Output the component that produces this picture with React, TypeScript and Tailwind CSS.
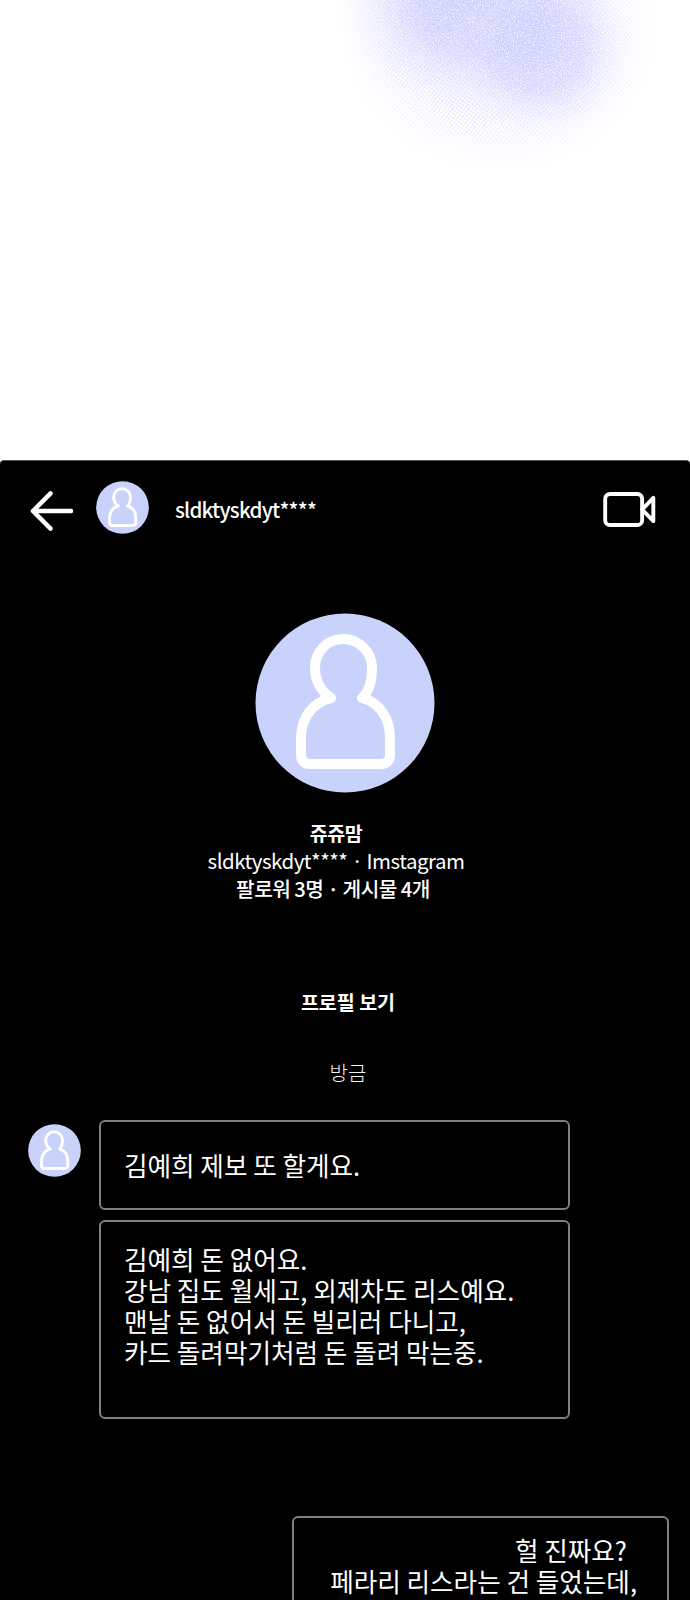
const FONT = "font-['Noto_Sans_CJK_KR','Noto_Sans',sans-serif]";

function Avatar({ size, stroke }: { size: string; stroke: number }) {
  return (
    <svg viewBox="0 0 180 180" className={`${size} shrink-0`} aria-hidden="true">
      <circle cx="90" cy="90" r="89.5" fill="#c9d2fa" />
      <path
        d="M76 85 C65 78 60 66 60 55 C60 39 72 26 88 26 C104 26 117 39 117 55 C117 66 115 78 107 85 C124 89 135 105 135 125 L135 142 C135 148 131 151 126 151 L55 151 C50 151 46 148 46 142 L46 125 C46 105 58 89 76 85 Z"
        fill="none"
        stroke="#fff"
        strokeWidth={stroke}
        strokeLinejoin="round"
      />
    </svg>
  );
}

function Blob() {
  return (
    <svg viewBox="0 0 390 190" className="absolute left-[300px] top-0 w-[390px] h-[190px]" aria-hidden="true">
      <defs>
        <radialGradient id="core" cx="0.5" cy="0.5" r="0.5">
          <stop offset="0" stopColor="#cbcbff" stopOpacity="1" />
          <stop offset="0.45" stopColor="#cfcfff" stopOpacity="0.9" />
          <stop offset="0.75" stopColor="#dcdcff" stopOpacity="0.35" />
          <stop offset="1" stopColor="#f2f2ff" stopOpacity="0" />
        </radialGradient>
        <radialGradient id="halo" cx="0.5" cy="0.5" r="0.5">
          <stop offset="0" stopColor="#fff" stopOpacity="1" />
          <stop offset="0.6" stopColor="#fff" stopOpacity="0.75" />
          <stop offset="1" stopColor="#fff" stopOpacity="0" />
        </radialGradient>
        <pattern id="dots" width="3.2" height="3.2" patternUnits="userSpaceOnUse" patternTransform="rotate(38)">
          <circle cx="1.6" cy="1.6" r="0.95" fill="#cfcfff" />
        </pattern>
        <mask id="haloMask">
          <ellipse cx="200" cy="30" rx="160" ry="145" fill="url(#halo)" />
        </mask>
        <filter id="grain" x="0" y="0" width="100%" height="100%">
          <feTurbulence type="fractalNoise" baseFrequency="0.75" numOctaves="2" seed="4" result="n" />
          <feColorMatrix in="n" type="matrix" values="0 0 0 0 1  0 0 0 0 1  0 0 0 0 1  0 0 0 2.6 -1.2" result="w" />
          <feComposite in="w" in2="SourceGraphic" operator="over" />
        </filter>
      </defs>
      <rect width="390" height="190" fill="url(#dots)" mask="url(#haloMask)" />
      <g filter="url(#grain)">
        <rect width="390" height="190" fill="#fff" fillOpacity="0" />
        <ellipse cx="180" cy="-5" rx="150" ry="125" fill="url(#core)" />
        <ellipse cx="240" cy="50" rx="95" ry="90" fill="url(#core)" opacity="0.8" />
      </g>
    </svg>
  );
}

function Bubble({ className, children }: { className: string; children: React.ReactNode }) {
  return (
    <div className={`border-2 border-[#7f7f7f] rounded-[6px] text-[25.6px] leading-[31px] text-white ${className}`}>
      {children}
    </div>
  );
}

export default function App() {
  return (
    <div className={`w-[690px] h-[1600px] overflow-hidden bg-white ${FONT}`}>
      <div className="relative h-[460px] bg-white">
        <Blob />
      </div>
      <div className="h-[1140px] bg-black rounded-t-[4px] border-t border-[#555] text-white">
        <header className="flex items-center h-[92px] pl-[30px] pr-[34px] pt-[1px]">
          <svg viewBox="0 0 44 42" className="w-[43px] h-[42px] mt-[6px] shrink-0" aria-hidden="true">
            <path d="M42 21 H3 M21 3 L3 21 L21 39" fill="none" stroke="#fff" strokeWidth="4.5" strokeLinecap="round" strokeLinejoin="round" />
          </svg>
          <div className="ml-[23px]"><Avatar size="w-[53px] h-[53px]" stroke={10} /></div>
          <span className="ml-[26px] mt-[3px] text-[20.5px] leading-[28px] tracking-[-0.75px] font-medium">sldktyskdyt****</span>
          <svg viewBox="0 0 54 36" className="ml-auto mt-[4px] w-[53px] h-[35px] shrink-0" aria-hidden="true">
            <rect x="2" y="2" width="38" height="32" rx="5" fill="none" stroke="#fff" strokeWidth="4" />
            <path d="M40 18 L51.5 6 V30 Z" fill="none" stroke="#fff" strokeWidth="4" strokeLinejoin="round" />
          </svg>
        </header>

        <div className="flex flex-col items-center mt-[60px]">
          <Avatar size="w-[180px] h-[180px]" stroke={10} />
        </div>
        <div className="w-[518px] ml-[77px] mt-[26px] text-center text-[20.5px] leading-[28px] tracking-[-0.5px]">
          <p className="font-bold text-[19.5px]">쥬쥬맘</p>
          <p className="-translate-y-px">sldktyskdyt**** · Imstagram</p>
          <p className="text-[20.2px] font-medium pr-[6px]">팔로워 3명 · 게시물 4개</p>
        </div>
        <p className="mt-[86px] pl-[6px] text-center text-[19.5px] leading-[26px] font-bold">프로필 보기</p>
        <p className="mt-[45px] pl-[6px] text-center text-[20px] leading-[26px] font-light text-[#f2f2f2]">방금</p>

        <div className="flex mt-[34px] pl-[28px]">
          <div className="mt-[4px]"><Avatar size="w-[53px] h-[53px]" stroke={10} /></div>
          <div className="ml-[18px] flex flex-col gap-[10px]">
            <Bubble className="w-[471px] h-[90px] pl-[23px] pt-[27px]">김예희 제보 또 할게요.</Bubble>
            <Bubble className="w-[471px] h-[199px] pl-[23px] pt-[21px]">
              김예희 돈 없어요.
              <br />강남 집도 월세고, 외제차도 리스예요.
              <br />맨날 돈 없어서 돈 빌리러 다니고,
              <br />카드 돌려막기처럼 돈 돌려 막는중.
            </Bubble>
          </div>
        </div>

        <div className="flex justify-end mt-[97px] pr-[21px]">
          <Bubble className="w-[377px] h-[200px] pr-[30px] pt-[16px] text-right">
            <span className="pr-[10px]">헐 진짜요?</span>
            <br />페라리 리스라는 건 들었는데,
          </Bubble>
        </div>
      </div>
    </div>
  );
}
